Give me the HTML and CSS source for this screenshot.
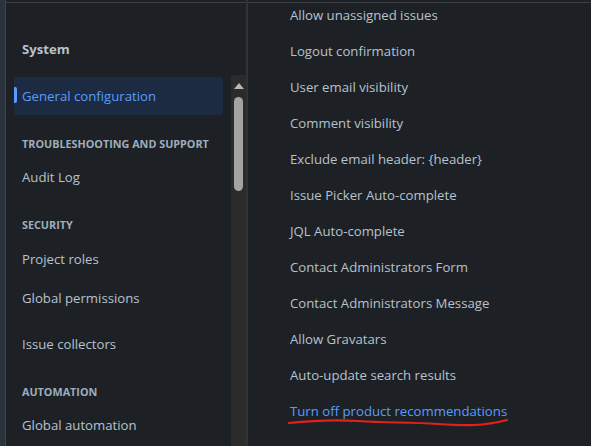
FILE: index.html
```html
<!DOCTYPE html>
<html>
<head>
<meta charset="utf-8">
<link rel="stylesheet" href="styles.css">
</head>
<body>
<div class="app">
  <div class="edge"></div>
  <div class="main">
    <div class="side-col">
      <nav class="sidebar">
        <div class="side-title">System</div>
        <a class="nav-item active">General configuration</a>
        <div class="nav-head">TROUBLESHOOTING AND SUPPORT</div>
        <a class="nav-item">Audit Log</a>
        <div class="nav-head">SECURITY</div>
        <a class="nav-item">Project roles</a>
        <a class="nav-item">Global permissions</a>
        <a class="nav-item extra">Issue collectors</a>
        <div class="nav-head">AUTOMATION</div>
        <a class="nav-item">Global automation</a>
      </nav>
      <div class="scrollbar">
        <div class="scroll-up"></div>
        <div class="scroll-thumb"></div>
      </div>
    </div>
    <div class="divider"></div>
    <ul class="settings">
      <li>Allow unassigned issues</li>
      <li>Logout confirmation</li>
      <li>User email visibility</li>
      <li>Comment visibility</li>
      <li>Exclude email header: {header}</li>
      <li>Issue Picker Auto-complete</li>
      <li>JQL Auto-complete</li>
      <li>Contact Administrators Form</li>
      <li>Contact Administrators Message</li>
      <li>Allow Gravatars</li>
      <li>Auto-update search results</li>
      <li class="link"><span class="marked">Turn off product recommendations<svg class="scribble" width="224" height="12" viewBox="0 0 224 12"><path d="M1 6 C 20 4, 40 2, 70 4 S 120 5, 150 7 S 195 9, 219 3" fill="none" stroke="#e3201b" stroke-width="2.2" stroke-linecap="round"/></svg></span></li>
    </ul>
  </div>
</div>
</body>
</html>
```
FILE: styles.css
```css
* { box-sizing: border-box; }
html, body {
  margin: 0;
  padding: 0;
  background: #1d2125;
  width: 591px;
  height: 446px;
  overflow: hidden;
  font-family: "Open Sans", "Noto Sans", sans-serif;
}
.app {
  display: flex;
  height: 446px;
}
.edge {
  width: 6px;
  flex: none;
  background: #2a323c;
  border-right: 1px solid #3a4450;
}
.main {
  flex: 1;
  display: flex;
  margin-top: 2px;
  border-top: 1px solid #3a3f46;
  min-width: 0;
}
.side-col {
  display: flex;
  flex: none;
}
.sidebar {
  width: 225px;
  padding: 36px 8px 0 8px;
  display: flex;
  flex-direction: column;
}
.side-title {
  font-size: 13.2px;
  font-weight: 700;
  color: #b6c2cf;
  line-height: 20px;
  padding-left: 8px;
  margin-bottom: 18px;
}
.nav-item {
  display: flex;
  align-items: center;
  height: 38px;
  padding-left: 8px;
  font-size: 13.2px;
  color: #b6c2cf;
  border-radius: 3px;
  margin-bottom: 2px;
  position: relative;
}
.nav-item.extra { margin-top: 6px; }
.nav-item.active {
  background: #1c2b41;
  color: #579dff;
}
.nav-item.active::before {
  content: "";
  position: absolute;
  left: 0;
  top: 10px;
  width: 3px;
  height: 16px;
  border-radius: 0 2px 2px 0;
  background: #579dff;
}
.nav-head {
  font-size: 10.8px;
  font-weight: 700;
  color: #9fadbc;
  line-height: 16px;
  padding-left: 8px;
  margin-top: 19px;
  margin-bottom: 7px;
}
.scrollbar {
  width: 15px;
  margin-top: 72px;
  background: #2b2b2b;
  display: flex;
  flex-direction: column;
  align-items: center;
}
.scroll-up {
  margin-top: 8px;
  width: 0;
  height: 0;
  border-left: 5px solid transparent;
  border-right: 5px solid transparent;
  border-bottom: 6px solid #b8b8b8;
}
.scroll-thumb {
  margin-top: 8px;
  width: 9px;
  height: 94px;
  border-radius: 5px;
  background: #a3a3a3;
}
.divider {
  width: 2px;
  flex: none;
  margin-top: -3px;
  background: #2e3339;
}
.settings {
  list-style: none;
  margin: -6px 0 0 0;
  padding: 0 0 0 42px;
}
.settings li {
  font-size: 13.2px;
  line-height: 20px;
  padding: 8px 0;
  color: #b6c2cf;
  white-space: nowrap;
}
.settings li.link { color: #579dff; }
.marked { position: relative; display: inline-block; }
.scribble {
  position: absolute;
  left: -2px;
  top: 16px;
}
```
